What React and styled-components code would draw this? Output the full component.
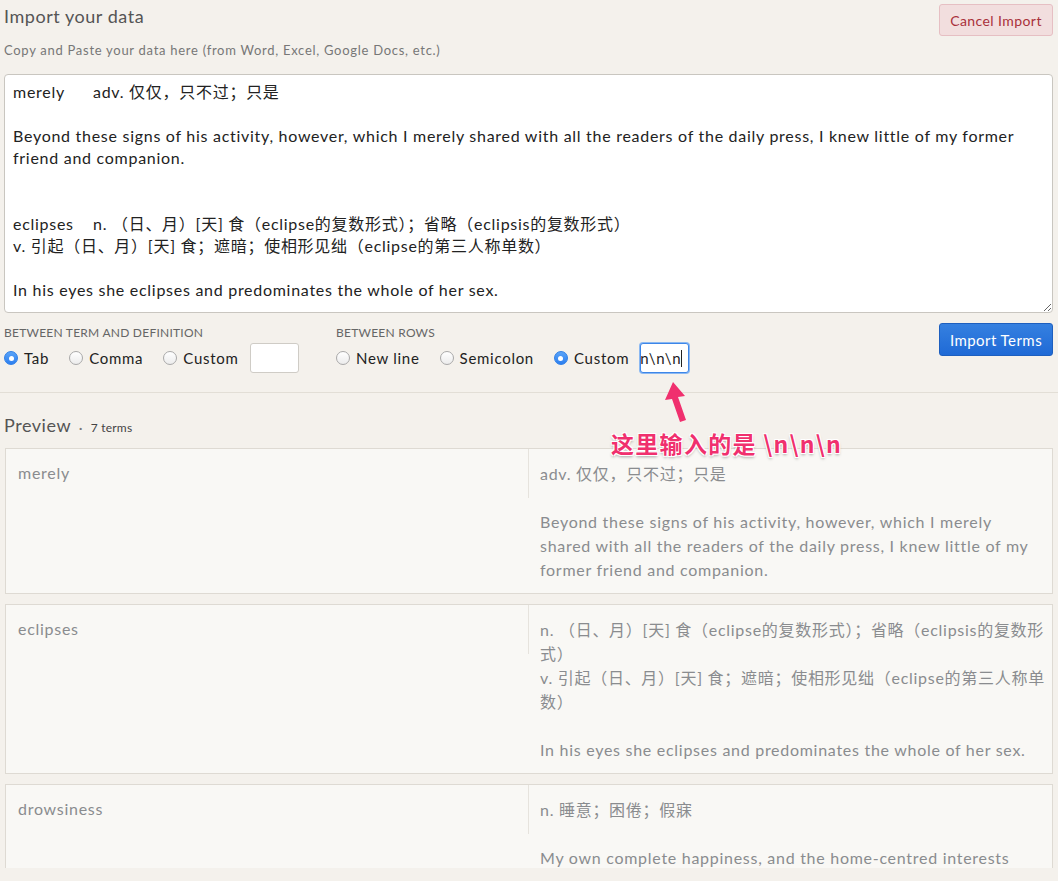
import React from "react";
import styled, { createGlobalStyle } from "styled-components";

const rawText = `merely\tadv. 仅仅，只不过；只是

Beyond these signs of his activity, however, which I merely shared with all the readers of the daily press, I knew little of my former friend and companion.


eclipses\tn. （日、月）[天] 食（eclipse的复数形式）；省略（eclipsis的复数形式）
v. 引起（日、月）[天] 食；遮暗；使相形见绌（eclipse的第三人称单数）

In his eyes she eclipses and predominates the whole of her sex.`;

const termOptions = [
  { label: "Tab", checked: true },
  { label: "Comma" },
  { label: "Custom", input: "" },
];

const rowOptions = [
  { label: "New line" },
  { label: "Semicolon" },
  { label: "Custom", checked: true, input: "\\n\\n\\n", focused: true },
];

const terms = [
  {
    term: "merely",
    definition:
      "adv. 仅仅，只不过；只是\n\nBeyond these signs of his activity, however, which I merely shared with all the readers of the daily press, I knew little of my former friend and companion.",
  },
  {
    term: "eclipses",
    definition:
      "n. （日、月）[天] 食（eclipse的复数形式）；省略（eclipsis的复数形式）\nv. 引起（日、月）[天] 食；遮暗；使相形见绌（eclipse的第三人称单数）\n\nIn his eyes she eclipses and predominates the whole of her sex.",
  },
  {
    term: "drowsiness",
    definition:
      "n. 睡意；困倦；假寐\n\nMy own complete happiness, and the home-centred interests which rise up around the man who first finds himself master of his own establishment, were sufficient to absorb all my attention.",
  },
];

const GlobalStyle = createGlobalStyle`
  body {
    margin: 0;
    background: #f4f1ec;
    font-family: Lato, "Noto Sans CJK SC", sans-serif;
    letter-spacing: 0.045em;
    color: #333;
  }
`;

const Page = styled.div`
  position: relative;
  height: 868px;
  overflow: hidden;
`;

const ImportPanel = styled.section`
  padding: 4px 5px 19px 4px;
  border-bottom: 1px solid #e2ded6;
`;

const Header = styled.div`
  display: flex;
  justify-content: space-between;
  align-items: flex-start;
`;

const Title = styled.h1`
  margin: 0;
  font-size: 18px;
  line-height: 24px;
  font-weight: 400;
  letter-spacing: 0.03em;
  color: #555;
`;

const Subtitle = styled.p`
  margin: 13px 0 0;
  font-size: 13px;
  line-height: 18px;
  color: #777;
`;

const Button = styled.button`
  width: 114px;
  height: ${(p) => (p.$primary ? "33px" : "32px")};
  border-radius: 3px;
  font-family: Lato, sans-serif;
  font-size: ${(p) => (p.$primary ? "15px" : "14px")};
  letter-spacing: 0.03em;
  cursor: pointer;
  border: 1px solid ${(p) => (p.$primary ? "#1d5fbf" : "#e6bfc3")};
  color: ${(p) => (p.$primary ? "#fff" : "#a9303a")};
  background: ${(p) =>
    p.$primary ? "linear-gradient(#3580e0, #1f6ad6)" : "#f2dede"};
`;

const DataArea = styled.textarea`
  display: block;
  box-sizing: border-box;
  width: 100%;
  height: 239px;
  margin-top: 15px;
  padding: 6px 8px;
  border: 1px solid #c9c6c0;
  border-radius: 4px;
  background: #fff;
  font-family: Lato, "Noto Sans CJK SC", sans-serif;
  font-size: 16px;
  line-height: 22px;
  letter-spacing: 0.045em;
  color: #222;
  tab-size: 80px;
  -moz-tab-size: 80px;
  outline: none;
`;

const OptionsRow = styled.div`
  display: flex;
  align-items: flex-start;
  margin-top: 12px;
`;

const OptionGroup = styled.div`
  width: ${(p) => p.$width || "auto"};
`;

const GroupLabel = styled.div`
  font-size: 12px;
  line-height: 16px;
  color: #666;
  text-transform: uppercase;
  letter-spacing: 0.02em;
`;

const Choices = styled.div`
  display: flex;
  align-items: center;
  gap: 20px;
  margin-top: 2px;
  height: 30px;
`;

const Choice = styled.label`
  display: flex;
  align-items: center;
  gap: 6px;
  font-size: 15px;
  color: #222;
`;

const Radio = styled.span`
  box-sizing: border-box;
  width: 14px;
  height: 14px;
  border-radius: 50%;
  display: flex;
  align-items: center;
  justify-content: center;
  border: 1px solid ${(p) => (p.$checked ? "#2f7fe6" : "#a9a9a9")};
  background: ${(p) =>
    p.$checked
      ? "linear-gradient(#5aa4f8, #2c7ff0)"
      : "linear-gradient(#fff, #ececec)"};

  &::after {
    content: "";
    display: ${(p) => (p.$checked ? "block" : "none")};
    width: 5px;
    height: 5px;
    border-radius: 50%;
    background: #fff;
  }
`;

const SmallInput = styled.div`
  box-sizing: border-box;
  width: 49px;
  height: 30px;
  margin-left: -9px;
  padding: 0 6px;
  display: flex;
  align-items: center;
  justify-content: flex-end;
  overflow: hidden;
  white-space: nowrap;
  background: #fff;
  border: 1px solid ${(p) => (p.$focused ? "#3d86e8" : "#cfccc6")};
  box-shadow: ${(p) => (p.$focused ? "0 0 0 1px #8ab8f2" : "none")};
  border-radius: 3px;
  font-size: 15px;
  color: #222;
`;

const Caret = styled.span`
  display: inline-block;
  width: 1px;
  height: 17px;
  background: #222;
  flex-shrink: 0;
`;

const ButtonSlot = styled.div`
  margin-left: auto;
  margin-top: -2px;
`;

const PreviewSection = styled.section`
  padding: 20px 5px 0 5px;
`;

const PreviewHeader = styled.div`
  display: flex;
  align-items: baseline;
  gap: 8px;
  margin-left: -1px;
`;

const PreviewTitle = styled.h2`
  margin: 0;
  font-size: 18px;
  line-height: 24px;
  font-weight: 400;
  letter-spacing: 0.03em;
  color: #555;
`;

const TermCount = styled.span`
  font-size: 12px;
  color: #444;
  letter-spacing: 0.02em;

  &::before {
    content: "·";
    margin-right: 8px;
    color: #777;
    font-weight: 700;
  }
`;

const CardList = styled.div`
  display: flex;
  flex-direction: column;
  gap: 10px;
  margin-top: 11px;
`;

const Card = styled.div`
  display: grid;
  grid-template-columns: 523px 1fr;
  align-items: start;
  background: #f9f8f5;
  border: 1px solid #dedad3;
`;

const TermCell = styled.div`
  padding: 12px 12px 13px;
  border-right: 1px solid #e6e3dd;
  font-size: 16px;
  line-height: 24px;
  color: #8a8c8f;
`;

const DefinitionCell = styled.div`
  padding: 13px 7px 11px 11px;
  font-size: 16px;
  line-height: 24px;
  color: #8a8c8f;
  white-space: pre-wrap;
`;

const Annotation = styled.div`
  position: absolute;
  left: 611px;
  top: 378px;
  display: flex;
  flex-direction: column;
  align-items: flex-start;
`;

const AnnotationText = styled.div`
  margin-top: 4px;
  font-family: "Noto Sans CJK SC", Lato, sans-serif;
  font-size: 23px;
  font-weight: 700;
  line-height: 30px;
  color: #f0306e;
  letter-spacing: 1.3px;
  text-shadow: -1px -1px 0 #fff, 1px -1px 0 #fff, -1px 1px 0 #fff,
    1px 1px 0 #fff, 0 2px 3px rgba(0, 0, 0, 0.35);
`;

function OptionChoices({ options }) {
  return (
    <Choices>
      {options.map((opt) => (
        <React.Fragment key={opt.label}>
          <Choice>
            <Radio $checked={opt.checked} />
            {opt.label}
          </Choice>
          {opt.input !== undefined && (
            <SmallInput $focused={opt.focused}>
              {opt.input}
              {opt.focused && <Caret />}
            </SmallInput>
          )}
        </React.Fragment>
      ))}
    </Choices>
  );
}

export default function App() {
  return (
    <>
      <GlobalStyle />
      <Page>
        <ImportPanel>
          <Header>
            <div>
              <Title>Import your data</Title>
              <Subtitle>
                Copy and Paste your data here (from Word, Excel, Google Docs,
                etc.)
              </Subtitle>
            </div>
            <Button>Cancel Import</Button>
          </Header>
          <DataArea readOnly value={rawText} />
          <OptionsRow>
            <OptionGroup $width="332px">
              <GroupLabel>Between term and definition</GroupLabel>
              <OptionChoices options={termOptions} />
            </OptionGroup>
            <OptionGroup>
              <GroupLabel>Between rows</GroupLabel>
              <OptionChoices options={rowOptions} />
            </OptionGroup>
            <ButtonSlot>
              <Button $primary>Import Terms</Button>
            </ButtonSlot>
          </OptionsRow>
        </ImportPanel>
        <PreviewSection>
          <PreviewHeader>
            <PreviewTitle>Preview</PreviewTitle>
            <TermCount>7 terms</TermCount>
          </PreviewHeader>
          <CardList>
            {terms.map((t) => (
              <Card key={t.term}>
                <TermCell>{t.term}</TermCell>
                <DefinitionCell>{t.definition}</DefinitionCell>
              </Card>
            ))}
          </CardList>
        </PreviewSection>
        <Annotation>
          <svg width="90" height="46" viewBox="0 0 90 46">
            <path d="M62 4 L54 22 L61 21 L69 44 L75 42 L67 19 L74 18 Z" fill="#f0306e" />
          </svg>
          <AnnotationText>这里输入的是 \n\n\n</AnnotationText>
        </Annotation>
      </Page>
    </>
  );
}
